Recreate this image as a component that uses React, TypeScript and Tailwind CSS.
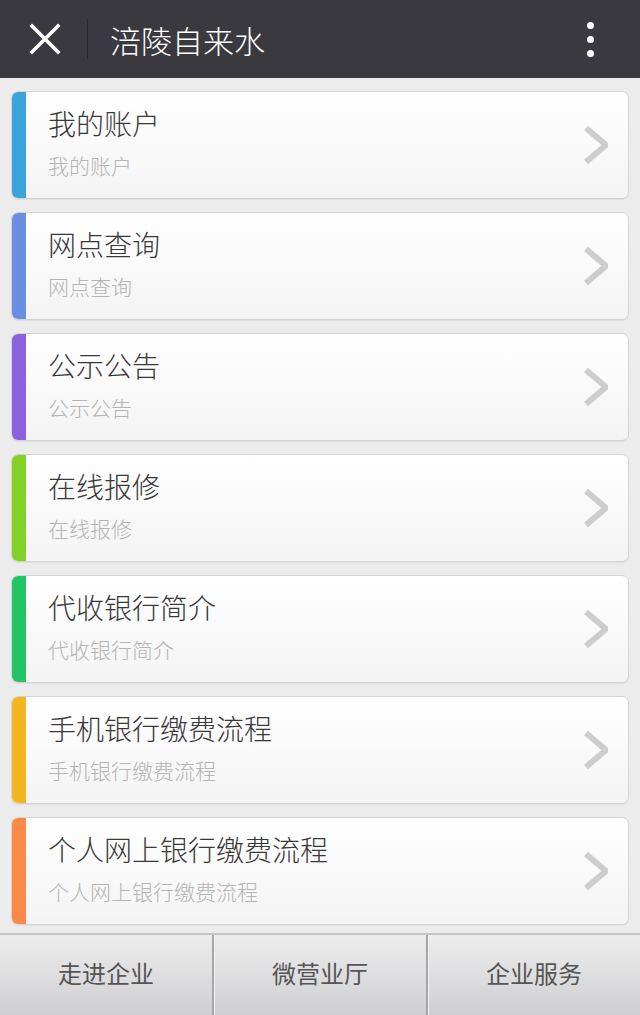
import React from 'react'

type MenuItem = {
  title: string
  bar: string
}

const items: MenuItem[] = [
  { title: '我的账户', bar: 'bg-[#3aa3dc]' },
  { title: '网点查询', bar: 'bg-[#6a8fe2]' },
  { title: '公示公告', bar: 'bg-[#8b63df]' },
  { title: '在线报修', bar: 'bg-[#82d126]' },
  { title: '代收银行简介', bar: 'bg-[#22c464]' },
  { title: '手机银行缴费流程', bar: 'bg-[#f3b520]' },
  { title: '个人网上银行缴费流程', bar: 'bg-[#fb8a48]' },
]

const tabs = ['走进企业', '微营业厅', '企业服务']

function Chevron() {
  return (
    <svg width="30" height="40" viewBox="0 0 30 40" className="shrink-0">
      <polyline points="4,3 24,20 4,37" fill="none" stroke="#cdcdcd" strokeWidth="6" strokeLinejoin="bevel" />
    </svg>
  )
}

export default function App() {
  return (
    <div className="w-[640px] h-[1015px] flex flex-col bg-[#ececec] font-['Noto_Sans_CJK_SC','Noto_Sans',sans-serif] overflow-hidden">
      {/* top bar */}
      <header className="h-[78px] shrink-0 bg-[#3a393f] flex items-center">
        <div className="w-[87px] flex items-center justify-center pl-[2px]">
          <svg width="32" height="32" viewBox="0 0 32 32">
            <path d="M3 3 L29 29 M29 3 L3 29" stroke="#ffffff" strokeWidth="3.6" strokeLinecap="square" />
          </svg>
        </div>
        <div className="w-px h-[40px] bg-[#29282d]" />
        <h1 className="ml-[22px] text-[31px] leading-none text-white font-light">涪陵自来水</h1>
        <div className="ml-auto mr-[46px] flex flex-col gap-[7px]">
          <span className="w-[7px] h-[7px] rounded-full bg-white" />
          <span className="w-[7px] h-[7px] rounded-full bg-white" />
          <span className="w-[7px] h-[7px] rounded-full bg-white" />
        </div>
      </header>

      {/* menu cards */}
      <main className="flex-1 px-[11px] pt-[13px] flex flex-col gap-[13px]">
        {items.map((item) => (
          <div
            key={item.title}
            className="h-[108px] flex rounded-[7px] border border-[#d4d4d4] bg-gradient-to-b from-white to-[#f4f4f5] overflow-hidden shadow-[0_1px_1px_rgba(0,0,0,0.06)]"
          >
            <div className={`w-[14px] shrink-0 ${item.bar}`} />
            <div className="flex-1 pl-[22px] pt-[13px] flex flex-col">
              <div className="text-[28px] leading-[36px] text-[#383838] font-light">{item.title}</div>
              <div className="mt-[11px] text-[21px] leading-[26px] text-[#b4b4b4] font-light">{item.title}</div>
            </div>
            <div className="flex items-center pr-[16px]">
              <Chevron />
            </div>
          </div>
        ))}
      </main>

      {/* bottom tabs */}
      <footer className="h-[82px] shrink-0 border-t-2 border-[#c4c4c6] bg-gradient-to-b from-[#ededee] to-[#cfcfd1] flex">
        {tabs.map((t, i) => (
          <div
            key={t}
            className={`flex-1 flex items-center justify-center pb-[4px] text-[24px] text-[#555555] ${
              i > 0 ? 'border-l-2 border-[#a6a6a8] shadow-[inset_1px_0_0_#f2f2f2]' : ''
            }`}
          >
            {t}
          </div>
        ))}
      </footer>
    </div>
  )
}
